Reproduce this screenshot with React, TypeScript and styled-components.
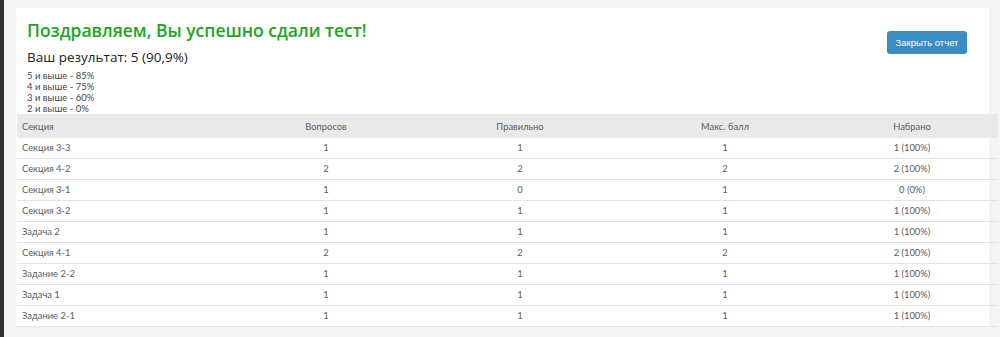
import React from "react";
import styled, { createGlobalStyle } from "styled-components";

const GlobalStyle = createGlobalStyle`
    html, body {
        margin: 0;
        padding: 0;
        background: #f3f3f3;
    }
    body {
        font-family: "Lato", "Open Sans", sans-serif;
        overflow: hidden;
    }
`;

const Layout = styled.div`
    display: flex;
    min-height: 337px;
    width: 1000px;
`;

const SideEdge = styled.div`
    width: 4px;
    flex-shrink: 0;
    background: #2c3035;
`;

const Main = styled.main`
    flex: 1;
    padding: 8px 11px 0 12px;
    min-width: 0;
`;

const Panel = styled.section`
    background: #ffffff;
`;

const PanelHead = styled.div`
    display: flex;
    justify-content: space-between;
    align-items: flex-start;
    padding: 11px 22px 0 11px;
`;

const Title = styled.h2`
    margin: 0;
    font-family: "Open Sans", sans-serif;
    font-weight: 600;
    font-size: 17.5px;
    line-height: 22px;
    color: #1ea51e;
`;

const Result = styled.div`
    margin-top: 8px;
    font-family: "Open Sans", sans-serif;
    font-size: 13.5px;
    line-height: 16px;
    color: #222;
`;

const Thresholds = styled.ul`
    list-style: none;
    margin: 5px 0 0;
    padding: 0;
    font-size: 9.5px;
    line-height: 11px;
    color: #444;
`;

const CloseButton = styled.button`
    margin-top: 12px;
    width: 80px;
    height: 23px;
    padding: 0;
    border: none;
    border-radius: 3px;
    background: #3a8dc3;
    color: #fff;
    font-family: "Liberation Sans", Arial, sans-serif;
    font-size: 9.5px;
    cursor: pointer;
`;

const Table = styled.table`
    width: 981px;
    margin-left: 1px;
    border-collapse: collapse;
    table-layout: fixed;
    font-size: 9.4px;
    color: #5c5c5c;
`;

const HeadCell = styled.th<{ $first?: boolean }>`
    height: 24px;
    padding: 0 5px;
    background: #e9e9e9;
    font-weight: 400;
    text-align: ${(p) => (p.$first ? "left" : "center")};
`;

const Row = styled.tr`
    border-bottom: 1px solid #dce6e4;
`;

const Cell = styled.td<{ $first?: boolean }>`
    height: 20px;
    padding: 0 5px;
    line-height: 12px;
    text-align: ${(p) => (p.$first ? "left" : "center")};
`;

const columns = [
    { title: "Секция", width: 219 },
    { title: "Вопросов", width: 180 },
    { title: "Правильно", width: 208 },
    { title: "Макс. балл", width: 202 },
    { title: "Набрано", width: 172 },
];

const rows = [
    ["Секция 3-3", "1", "1", "1", "1 (100%)"],
    ["Секция 4-2", "2", "2", "2", "2 (100%)"],
    ["Секция 3-1", "1", "0", "1", "0 (0%)"],
    ["Секция 3-2", "1", "1", "1", "1 (100%)"],
    ["Задача 2", "1", "1", "1", "1 (100%)"],
    ["Секция 4-1", "2", "2", "2", "2 (100%)"],
    ["Задание 2-2", "1", "1", "1", "1 (100%)"],
    ["Задача 1", "1", "1", "1", "1 (100%)"],
    ["Задание 2-1", "1", "1", "1", "1 (100%)"],
];

const thresholds = ["5 и выше - 85%", "4 и выше - 75%", "3 и выше - 60%", "2 и выше - 0%"];

const App = () => {
    return (
        <Layout>
            <GlobalStyle />
            <SideEdge />
            <Main>
                <Panel>
                    <PanelHead>
                        <div>
                            <Title>Поздравляем, Вы успешно сдали тест!</Title>
                            <Result>Ваш результат: 5 (90,9%)</Result>
                            <Thresholds>
                                {thresholds.map((t) => (
                                    <li key={t}>{t}</li>
                                ))}
                            </Thresholds>
                        </div>
                        <CloseButton>Закрыть отчет</CloseButton>
                    </PanelHead>
                    <Table>
                        <colgroup>
                            {columns.map((c) => (
                                <col key={c.title} style={{ width: c.width }} />
                            ))}
                        </colgroup>
                        <thead>
                            <tr>
                                {columns.map((c, i) => (
                                    <HeadCell key={c.title} $first={i === 0}>
                                        {c.title}
                                    </HeadCell>
                                ))}
                            </tr>
                        </thead>
                        <tbody>
                            {rows.map((r) => (
                                <Row key={r[0]}>
                                    {r.map((v, i) => (
                                        <Cell key={i} $first={i === 0}>
                                            {v}
                                        </Cell>
                                    ))}
                                </Row>
                            ))}
                        </tbody>
                    </Table>
                </Panel>
            </Main>
        </Layout>
    );
};

export default App;
